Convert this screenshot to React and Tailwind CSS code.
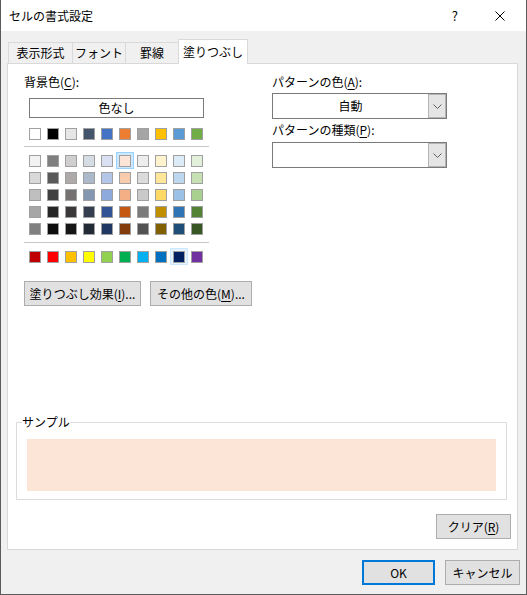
import React from 'react';

const themeRow = ['#ffffff', '#000000', '#e7e6e6', '#44546a', '#4472c4', '#ed7d31', '#a5a5a5', '#ffc000', '#5b9bd5', '#70ad47'];

const shadeRows = [
  ['#f2f2f2', '#7f7f7f', '#d0cece', '#d6dce4', '#d9e1f2', '#fce4d6', '#ededed', '#fff2cc', '#ddebf7', '#e2efda'],
  ['#d9d9d9', '#595959', '#aeaaaa', '#acb9ca', '#b4c6e7', '#f8cbad', '#dbdbdb', '#ffe699', '#bdd7ee', '#c6e0b4'],
  ['#bfbfbf', '#404040', '#757171', '#8497b0', '#8ea9db', '#f4b084', '#c9c9c9', '#ffd966', '#9bc2e6', '#a9d08e'],
  ['#a6a6a6', '#262626', '#3a3838', '#333f4f', '#305496', '#c65911', '#7b7b7b', '#bf8f00', '#2f75b5', '#548235'],
  ['#808080', '#0d0d0d', '#161616', '#222b35', '#203764', '#833c0c', '#525252', '#806000', '#1f4e78', '#375623'],
];

const standardRow = ['#c00000', '#ff0000', '#ffc000', '#ffff00', '#92d050', '#00b050', '#00b0f0', '#0070c0', '#002060', '#7030a0'];

const tabs = [
  { label: '表示形式', w: 'w-[65px]' },
  { label: 'フォント', w: 'w-[54px]' },
  { label: '罫線', w: 'w-[54px]' },
];

// state: 'selected' | 'hover' | undefined
const Swatch = ({ color, state }) => {
  const frame =
    state === 'selected'
      ? 'border-[#99d1ff] bg-[#cce8ff]'
      : state === 'hover'
      ? 'border-[#cce8ff] bg-[#e5f3ff]'
      : 'border-transparent';
  return (
    <div className={`w-[18px] h-[17px] border pt-[2px] pl-[2px] ${frame}`}>
      <div className="w-[12px] h-[12px] border border-[#a0a0a0]" style={{ backgroundColor: color }} />
    </div>
  );
};

const SwatchRow = ({ colors, selected, hover }) => (
  <div className="flex ml-[2px]">
    {colors.map((c, i) => (
      <Swatch key={i} color={c} state={i === selected ? 'selected' : i === hover ? 'hover' : undefined} />
    ))}
  </div>
);

const Chevron = () => (
  <svg width="9" height="5" viewBox="0 0 9 5" fill="none">
    <path d="M0.5 0.5 L4.5 4.5 L8.5 0.5" stroke="#5f5f5f" strokeWidth="1" />
  </svg>
);

const Combo = ({ value }) => (
  <div className="w-[175px] h-[26px] border border-[#7a7a7a] bg-white flex">
    <div className="flex-1 flex items-center justify-center">{value}</div>
    <div className="w-[18px] h-full border border-[#b4b4b4] bg-[#e5e5e5] flex items-center justify-center">
      <Chevron />
    </div>
  </div>
);

const Button = ({ children, className = '' }) => (
  <button className={`h-[25px] border border-[#adadad] bg-[#e1e1e1] flex items-center justify-center ${className}`}>
    {children}
  </button>
);

const U = ({ children }) => <span className="underline underline-offset-2">{children}</span>;

export default function App() {
  return (
    <div className="w-[527px] h-[595px] flex flex-col bg-[#f0f0f0] border-x border-b border-[#5b5b5b] font-['Noto_Sans_CJK_JP',sans-serif] text-[12px] leading-4 text-black">
      {/* Title bar */}
      <div className="h-[31px] bg-white flex items-center pl-2 shrink-0">
        <span>セルの書式設定</span>
        <span className="ml-auto text-[13px]">?</span>
        <svg className="ml-[37px] mr-[21px]" width="10" height="10" viewBox="0 0 10 10">
          <path d="M0.5 0.5 L9.5 9.5 M9.5 0.5 L0.5 9.5" stroke="#000" strokeWidth="1" />
        </svg>
      </div>

      {/* Tabs */}
      <div className="mt-2 ml-[7px] h-[25px] flex items-end">
        {tabs.map((t, i) => (
          <div
            key={t.label}
            className={`${t.w} h-[21px] mb-px border-x border-t border-[#d9d9d9] flex items-center justify-center ${i > 0 ? '-ml-px' : ''}`}
          >
            {t.label}
          </div>
        ))}
        <div className="relative z-10 -ml-px w-[70px] h-[25px] border-x border-t border-[#d9d9d9] bg-white flex items-center justify-center">
          塗りつぶし
        </div>
      </div>

      {/* Panel */}
      <div className="-mt-px ml-[6px] w-[511px] h-[487px] border border-[#d9d9d9] bg-white flex flex-col">
        <div className="flex pl-4 pt-[10px]">
          {/* Background colour */}
          <div className="w-[228px] flex flex-col">
            <div>
              背景色(<U>C</U>):
            </div>
            <div className="mt-2 ml-[5px] w-[175px] h-[20px] border border-[#7a7a7a] flex items-center justify-center">
              色なし
            </div>
            <div className="mt-[7px]">
              <SwatchRow colors={themeRow} />
            </div>
            <div className="mt-1 w-[185px] h-px bg-[#c8c8c8]" />
            <div className="mt-[5px] flex flex-col">
              {shadeRows.map((row, i) => (
                <SwatchRow key={i} colors={row} selected={i === 0 ? 5 : undefined} />
              ))}
            </div>
            <div className="mt-[5px] w-[185px] h-px bg-[#c8c8c8]" />
            <div className="mt-[5px]">
              <SwatchRow colors={standardRow} hover={8} />
            </div>
            <div className="mt-4 flex gap-[9px]">
              <Button className="w-[117px]">
                塗りつぶし効果(<U>I</U>)...
              </Button>
              <Button className="w-[102px]">
                その他の色(<U>M</U>)...
              </Button>
            </div>
          </div>

          {/* Pattern */}
          <div className="ml-5 flex flex-col">
            <div>
              パターンの色(<U>A</U>):
            </div>
            <div className="mt-[3px]">
              <Combo value="自動" />
            </div>
            <div className="mt-[3px]">
              パターンの種類(<U>P</U>):
            </div>
            <div className="mt-1">
              <Combo value="" />
            </div>
          </div>
        </div>

        {/* Sample */}
        <div className="relative mt-[116px] ml-2 w-[491px] border border-[#dcdcdc] pt-4 px-[10px] pb-2">
          <span className="absolute -top-[9px] left-[5px] bg-white">サンプル</span>
          <div className="h-[52px] bg-[#fce4d6]" />
        </div>

        <div className="mt-[14px] mr-[6px] flex justify-end">
          <Button className="w-[75px]">
            クリア(<U>R</U>)
          </Button>
        </div>
      </div>

      {/* Footer */}
      <div className="mt-[10px] pr-[6px] flex justify-end gap-[10px]">
        <button className="w-[73px] h-[25px] border-2 border-[#0078d7] bg-[#e1e1e1] flex items-center justify-center">
          OK
        </button>
        <Button className="w-[75px]">キャンセル</Button>
      </div>
    </div>
  );
}
